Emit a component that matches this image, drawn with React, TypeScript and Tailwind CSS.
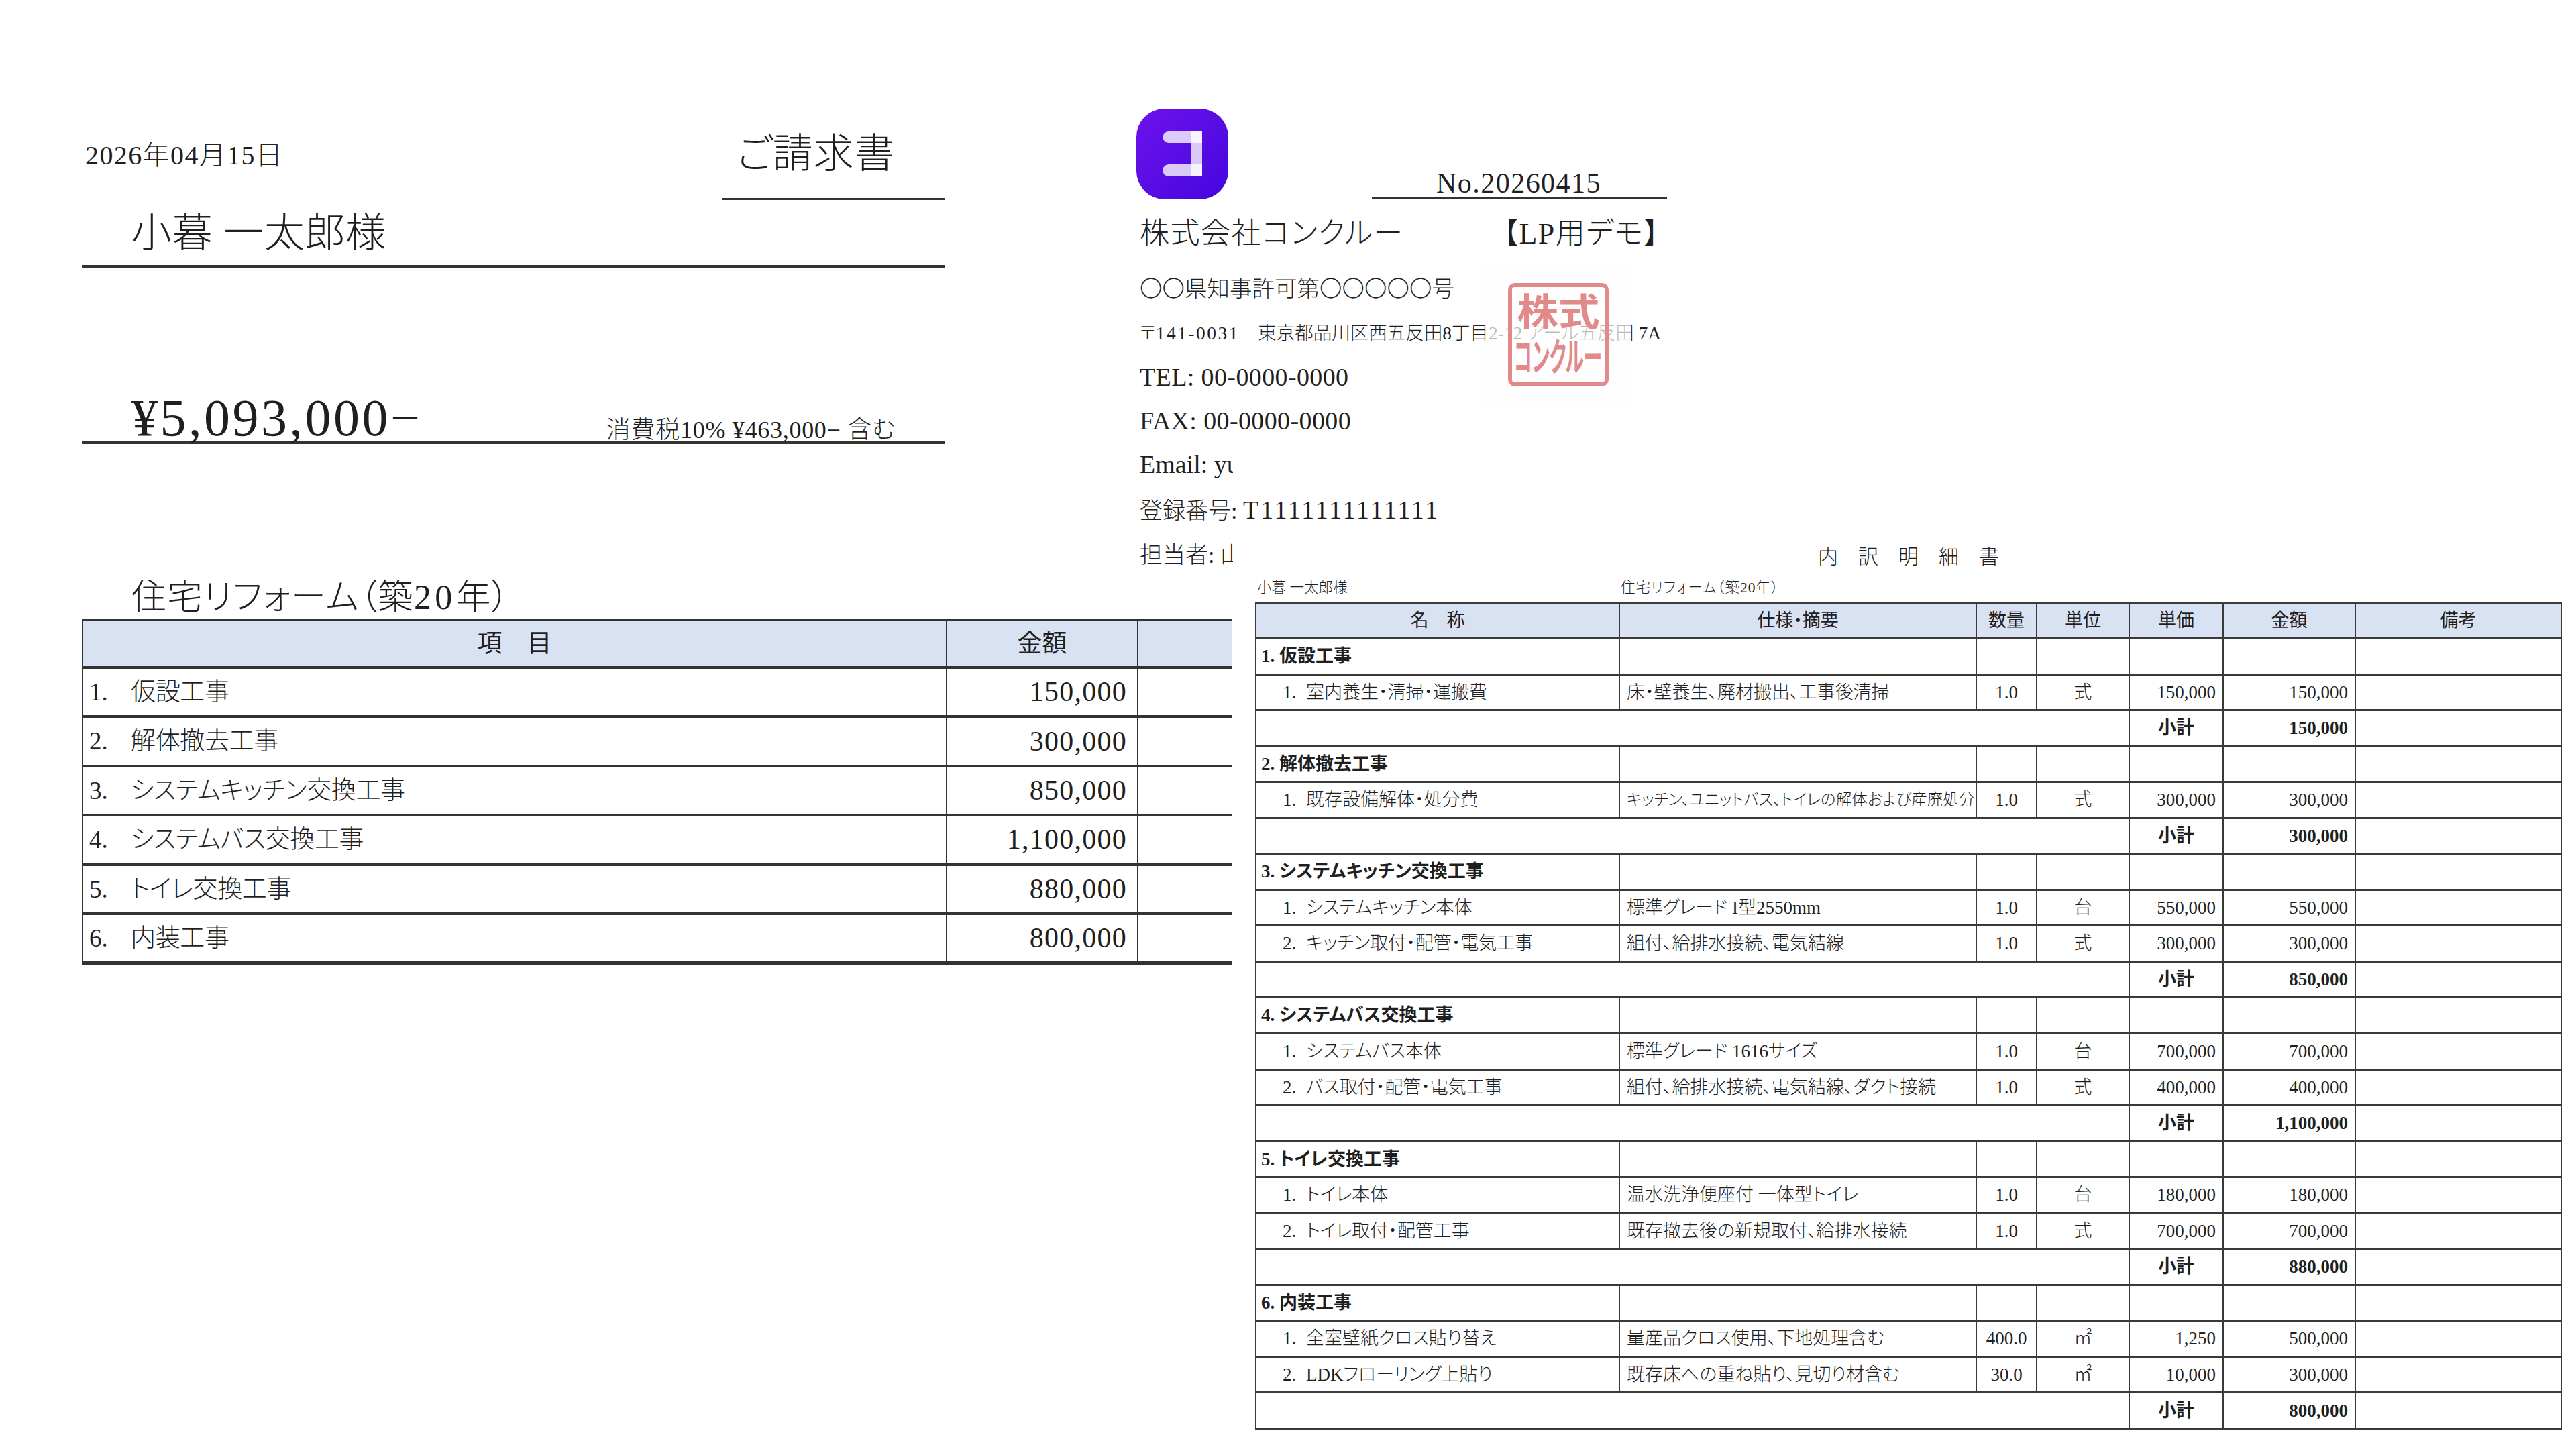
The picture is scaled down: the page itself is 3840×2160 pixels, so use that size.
import React from "react";

const invoiceRows = [
  ["1.", "仮設工事", "150,000"],
  ["2.", "解体撤去工事", "300,000"],
  ["3.", "システムキッチン交換工事", "850,000"],
  ["4.", "システムバス交換工事", "1,100,000"],
  ["5.", "トイレ交換工事", "880,000"],
  ["6.", "内装工事", "800,000"],
];

type Item = [string, string, string, string, string, string, string];
const sections: { head: string; total: string; items: Item[] }[] = [
  { head: "1. 仮設工事", total: "150,000", items: [["1.", "室内養生・清掃・運搬費", "床・壁養生、廃材搬出、工事後清掃", "1.0", "式", "150,000", "150,000"]] },
  { head: "2. 解体撤去工事", total: "300,000", items: [["1.", "既存設備解体・処分費", "キッチン、ユニットバス、トイレの解体および産廃処分", "1.0", "式", "300,000", "300,000"]] },
  {
    head: "3. システムキッチン交換工事",
    total: "850,000",
    items: [
      ["1.", "システムキッチン本体", "標準グレード I型2550mm", "1.0", "台", "550,000", "550,000"],
      ["2.", "キッチン取付・配管・電気工事", "組付、給排水接続、電気結線", "1.0", "式", "300,000", "300,000"],
    ],
  },
  {
    head: "4. システムバス交換工事",
    total: "1,100,000",
    items: [
      ["1.", "システムバス本体", "標準グレード 1616サイズ", "1.0", "台", "700,000", "700,000"],
      ["2.", "バス取付・配管・電気工事", "組付、給排水接続、電気結線、ダクト接続", "1.0", "式", "400,000", "400,000"],
    ],
  },
  {
    head: "5. トイレ交換工事",
    total: "880,000",
    items: [
      ["1.", "トイレ本体", "温水洗浄便座付 一体型トイレ", "1.0", "台", "180,000", "180,000"],
      ["2.", "トイレ取付・配管工事", "既存撤去後の新規取付、給排水接続", "1.0", "式", "700,000", "700,000"],
    ],
  },
  {
    head: "6. 内装工事",
    total: "800,000",
    items: [
      ["1.", "全室壁紙クロス貼り替え", "量産品クロス使用、下地処理含む", "400.0", "㎡", "1,250", "500,000"],
      ["2.", "LDKフローリング上貼り", "既存床への重ね貼り、見切り材含む", "30.0", "㎡", "10,000", "300,000"],
    ],
  },
];

const dc = "border-x-2 border-y-[3px] border-[#3a3a3a] p-0";
const hc = `${dc} text-center font-normal`;

function LeftHeader() {
  return (
    <>
      <div className="mt-[180px] flex h-[118px] justify-between">
        <div className="pl-[5px] pt-[28px] text-[40px] leading-[48px] tracking-[0.035em]">2026年04月15日</div>
        <div className="h-full w-[332px] border-b-[3px] border-[#333] pl-[21px] pt-[14px] text-[60px] leading-[72px] tracking-[0.015em]">ご請求書</div>
      </div>
      <div className="h-[101px] border-b-4 border-[#333] pl-[74px] pt-[14px] text-[60px] leading-[72px] tracking-[0.012em]">小暮 一太郎様</div>
      <div className="flex h-[263px] items-end justify-between border-b-4 border-[#333] pl-[74px] pr-[74px]">
        <div className="text-[78px] leading-[70px] tracking-[0.045em]">¥5,093,000−</div>
        <div className="text-[36px] leading-[34px] tracking-[0.02em]">消費税10% ¥463,000− 含む</div>
      </div>
      <div className="pl-[74px] pt-[198px] text-[52px] leading-[62px] tracking-[0.03em]">
        住宅リフォーム（築<span className="tracking-[0.1em]">20</span>年）
      </div>
    </>
  );
}

function InvoiceTable() {
  return (
    <table className="w-[1715px] table-fixed border-collapse border-b-[5px] border-[#333]">
      <colgroup>
        <col className="w-[1288px]" />
        <col className="w-[285px]" />
        <col />
      </colgroup>
      <thead>
        <tr className="h-[71px] bg-[#d9e2f3]">
          <th className="border-x-2 border-y-4 border-[#333] p-0 text-center text-[37px] font-normal">項　目</th>
          <th className="border-x-2 border-y-4 border-[#333] p-0 text-center text-[37px] font-normal">金額</th>
          <th className="border-y-4 border-l-2 border-[#333] p-0" />
        </tr>
      </thead>
      <tbody>
        {invoiceRows.map((r) => (
          <tr key={r[0]} className="h-[73.4px]">
            <td className="border-x-2 border-y-4 border-[#333] p-0 text-[37px]">
              <div className="flex pl-[9px]">
                <span className="w-[62px] shrink-0">{r[0]}</span>
                <span className="tracking-[-0.01em]">{r[1]}</span>
              </div>
            </td>
            <td className="border-x-2 border-y-4 border-[#333] p-0 pr-[15px] text-right text-[42px] tracking-[0.03em]">{r[2]}</td>
            <td className="border-y-4 border-l-2 border-[#333] p-0" />
          </tr>
        ))}
      </tbody>
    </table>
  );
}

function Logo() {
  return (
    <div className="flex h-[135px] w-[137px] shrink-0 items-center justify-center rounded-[42px] bg-linear-to-br from-[#6e10ec] to-[#4404de]">
      <svg width="59" height="67" viewBox="0 0 59 67" fill="#ffffff" fillOpacity="0.78">
        <path d="M9 0H59V17H9A8.5 8.5 0 0 1 9 0Z" />
        <path d="M42 0H59V67H42Z" />
        <path d="M9 49H59V67H9A9 9 0 0 1 9 49Z" />
      </svg>
    </div>
  );
}

function Stamp() {
  return (
    <div className="absolute left-[519px] top-[232px] flex h-[213px] w-[219px] items-center justify-center bg-[#fdfdfd]/70">
      <div className="-mt-[4px] flex h-[154px] w-[150px] flex-col items-center overflow-hidden rounded-[10px] border-[6px] border-[#e28a8a] font-['Noto_Sans_CJK_JP'] font-bold text-[#e28a8a]">
        <div className="scale-x-[1.1] whitespace-nowrap text-[56px] leading-[66px]">株式</div>
        <div className="scale-x-[0.48] whitespace-nowrap text-[58px] leading-[68px] [font-feature-settings:'normal']">コンクルー</div>
      </div>
    </div>
  );
}

function Company() {
  return (
    <div className="relative h-[650px] w-[800px]">
      <div className="flex items-end">
        <Logo />
        <div className="ml-[214px] h-[60px] w-[440px] border-b-[3px] border-[#333] pl-[96px] pt-[14px] text-[42px] leading-[44px] tracking-[0.035em]">No.20260415</div>
      </div>
      <div className="flex w-[780px] justify-between pl-[5px] pt-[26px] text-[44px] leading-[52px] tracking-[0.035em]">
        <span>株式会社コンクルー</span>
        <span>【LP用デモ】</span>
      </div>
      <div className="pl-[5px] pt-[35px] text-[33.5px] leading-[42px]">〇〇県知事許可第〇〇〇〇〇号</div>
      <div className="pl-[5px] pt-[27px] text-[27.5px] leading-[36px]">
        〒<span className="tracking-[0.09em]">141-0031</span>　東京都品川区西五反田8丁目2-12 アール五反田 7A
      </div>
      <div className="pl-[5px] pt-[24px] text-[38px] leading-[46px] tracking-[0.01em]">TEL: 00-0000-0000</div>
      <div className="pl-[5px] pt-[19px] text-[38px] leading-[46px] tracking-[0.01em]">FAX: 00-0000-0000</div>
      <div className="pl-[5px] pt-[19px] text-[38px] leading-[46px]">
        <div className="w-[139px] overflow-hidden whitespace-nowrap">Email: yu@example.jp</div>
      </div>
      <div className="pl-[5px] pt-[22px] text-[34px] leading-[46px]">
        登録番号: <span className="text-[38px] tracking-[0.075em]">T1111111111111</span>
      </div>
      <div className="pl-[5px] pt-[20px] text-[34px] leading-[46px]">
        <div className="w-[139px] overflow-hidden whitespace-nowrap">担当者: 山田 太郎</div>
      </div>
      <Stamp />
    </div>
  );
}

function DetailTable() {
  return (
    <div className="ml-[177px] w-[1948px]">
      <div className="text-center text-[30px] leading-[36px]">内　訳　明　細　書</div>
      <div className="flex h-[49px] items-center pt-[6px] text-[21.5px] leading-[28px]">
        <span className="ml-[3px] w-[542px]">小暮 一太郎様</span>
        <span className="tracking-[0.05em]">住宅リフォーム（築20年）</span>
      </div>
      <table className="w-full table-fixed border-collapse border-2 border-[#3a3a3a]">
        <colgroup>
          <col className="w-[542px]" />
          <col className="w-[532px]" />
          <col className="w-[90px]" />
          <col className="w-[138px]" />
          <col className="w-[140px]" />
          <col className="w-[197px]" />
          <col />
        </colgroup>
        <thead>
          <tr className="h-[53px] bg-[#d9e2f3] text-[27px]">
            {["名　称", "仕様・摘要", "数量", "単位", "単価", "金額", "備考"].map((h) => (
              <th key={h} className={hc}>{h}</th>
            ))}
          </tr>
        </thead>
        <tbody className="text-[27px]">
          {sections.map((s) => (
            <React.Fragment key={s.head}>
              <tr className="h-[53.55px]">
                <td className={`${dc} pl-[7px] font-bold`}>{s.head}</td>
                {[0, 1, 2, 3, 4, 5].map((i) => (
                  <td key={i} className={dc} />
                ))}
              </tr>
              {s.items.map((it) => (
                <tr key={it[1]} className="h-[53.55px]">
                  <td className={dc}>
                    <div className="flex pl-[39px]">
                      <span className="w-[35px] shrink-0">{it[0]}</span>
                      <span>{it[1]}</span>
                    </div>
                  </td>
                  <td className={`${dc} whitespace-nowrap pl-[10px] ${it[2].length > 24 ? "text-[23.5px]" : "text-[27px]"}`}>{it[2]}</td>
                  <td className={`${dc} text-center`}>{it[3]}</td>
                  <td className={`${dc} text-center`}>{it[4]}</td>
                  <td className={`${dc} pr-[10px] text-right`}>{it[5]}</td>
                  <td className={`${dc} pr-[10px] text-right`}>{it[6]}</td>
                  <td className={dc} />
                </tr>
              ))}
              <tr className="h-[53.55px]">
                <td colSpan={4} className={dc} />
                <td className={`${dc} text-center font-bold`}>小計</td>
                <td className={`${dc} pr-[10px] text-right font-bold`}>{s.total}</td>
                <td className={dc} />
              </tr>
            </React.Fragment>
          ))}
        </tbody>
      </table>
    </div>
  );
}

export default function App() {
  return (
    <div className="flex h-[2160px] w-[3840px] overflow-hidden bg-white font-['Liberation_Serif','Noto_Sans_CJK_JP',serif] font-light text-[#1f1f1f] [font-feature-settings:'palt']">
      <div className="w-[1694px] shrink-0 pl-[122px]">
        <div className="w-[1287px]">
          <LeftHeader />
        </div>
        <InvoiceTable />
      </div>
      <div className="pt-[162px]">
        <Company />
        <DetailTable />
      </div>
    </div>
  );
}
